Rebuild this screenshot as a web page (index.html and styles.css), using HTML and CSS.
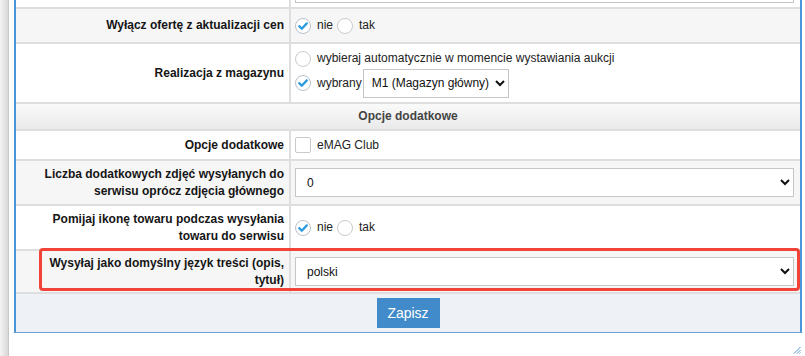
FILE: index.html
```html
<!DOCTYPE html>
<html lang="pl">

<head>
  <meta charset="UTF-8">
  <title>Ustawienia integracji</title>
  <link rel="stylesheet" href="styles.css">
</head>

<body>
  <div class="edge"></div>
  <div class="main">
    <div class="panel">
      <div class="row row-cut">
        <div class="label"></div>
        <div class="field"><input class="text-input" type="text"></div>
      </div>

      <div class="row row-alt row-toggle">
        <div class="label">Wyłącz ofertę z aktualizacji cen</div>
        <div class="field">
          <span class="choice">
            <svg class="radio" viewBox="0 0 16 16" width="16" height="16"><circle cx="8" cy="8" r="7.5" fill="#fff" stroke="#b8c2ca"/><path d="M4.2 8.2 L6.8 10.7 L11.8 5.4" fill="none" stroke="#2b9be0" stroke-width="2.3" stroke-linecap="round" stroke-linejoin="round"/></svg>
            nie
          </span>
          <span class="choice">
            <svg class="radio" viewBox="0 0 16 16" width="16" height="16"><circle cx="8" cy="8" r="7.5" fill="#fff" stroke="#cacaca"/></svg>
            tak
          </span>
        </div>
      </div>

      <div class="row row-stock">
        <div class="label">Realizacja z magazynu</div>
        <div class="field field-stack">
          <span class="choice choice-line">
            <svg class="radio" viewBox="0 0 16 16" width="16" height="16"><circle cx="8" cy="8" r="7.5" fill="#fff" stroke="#cacaca"/></svg>
            wybieraj automatycznie w momencie wystawiania aukcji
          </span>
          <span class="choice">
            <svg class="radio" viewBox="0 0 16 16" width="16" height="16"><circle cx="8" cy="8" r="7.5" fill="#fff" stroke="#b8c2ca"/><path d="M4.2 8.2 L6.8 10.7 L11.8 5.4" fill="none" stroke="#2b9be0" stroke-width="2.3" stroke-linecap="round" stroke-linejoin="round"/></svg>
            wybrany
            <select class="select select-stock">
              <option>M1 (Magazyn główny)</option>
            </select>
          </span>
        </div>
      </div>

      <div class="row row-section">
        <div class="section-title">Opcje dodatkowe</div>
      </div>

      <div class="row row-check">
        <div class="label">Opcje dodatkowe</div>
        <div class="field">
          <span class="choice">
            <span class="checkbox"></span>
            eMAG Club
          </span>
        </div>
      </div>

      <div class="row row-alt row-tall">
        <div class="label">Liczba dodatkowych zdjęć wysyłanych do serwisu oprócz zdjęcia głównego</div>
        <div class="field">
          <select class="select select-wide">
            <option>0</option>
          </select>
        </div>
      </div>

      <div class="row row-tall">
        <div class="label">Pomijaj ikonę towaru podczas wysyłania towaru do serwisu</div>
        <div class="field">
          <span class="choice">
            <svg class="radio" viewBox="0 0 16 16" width="16" height="16"><circle cx="8" cy="8" r="7.5" fill="#fff" stroke="#b8c2ca"/><path d="M4.2 8.2 L6.8 10.7 L11.8 5.4" fill="none" stroke="#2b9be0" stroke-width="2.3" stroke-linecap="round" stroke-linejoin="round"/></svg>
            nie
          </span>
          <span class="choice">
            <svg class="radio" viewBox="0 0 16 16" width="16" height="16"><circle cx="8" cy="8" r="7.5" fill="#fff" stroke="#cacaca"/></svg>
            tak
          </span>
        </div>
      </div>

      <div class="row row-alt row-lang highlighted">
        <div class="label">Wysyłaj jako domyślny język treści (opis, tytuł)</div>
        <div class="field">
          <select class="select select-wide">
            <option>polski</option>
          </select>
        </div>
      </div>

      <div class="actions">
        <button class="btn-save" type="button">Zapisz</button>
      </div>
    </div>

    <div class="grip-row">
      <svg class="grip" viewBox="0 0 8 8" width="8" height="8">
        <path d="M7.5 1 L1 7.5 M7.5 4 L4 7.5 M7.5 6.5 L6.5 7.5" stroke="#5d97d3" stroke-width="1"/>
      </svg>
    </div>
  </div>
</body>

</html>
```

FILE: styles.css
```css
* {
  box-sizing: border-box;
}

body {
  margin: 0;
  height: 356px;
  overflow: hidden;
  display: flex;
  background: #fff;
  font-family: "Liberation Sans", Arial, sans-serif;
  font-size: 12px;
  line-height: 17px;
  color: #222;
}

.edge {
  width: 9px;
  flex: none;
  background: linear-gradient(to right, #f4f4f4, #d7d7d7);
  border-right: 1px solid #c8c8c8;
}

.main {
  flex: 1;
  padding: 0 3px 0 5px;
  display: flex;
  flex-direction: column;
}

.panel {
  border: 2px solid #4a94da;
  border-top: 0;
  border-bottom: 1px solid #6c9fd2;
}

/* rows */

.row {
  display: grid;
  grid-template-columns: 275px 1fr;
  border-bottom: 2px solid #dedede;
  background: #fff;
}

.row-alt {
  background: #f6f6f6;
}

.row-cut {
  height: 9px;
  overflow: hidden;
}

.row-toggle {
  min-height: 35px;
}

.row-stock {
  min-height: 60px;
}

.row-section {
  display: flex;
  min-height: 27px;
  background: linear-gradient(#fafafa, #eaeaea);
}

.row-check {
  min-height: 30px;
}

.row-tall {
  min-height: 45px;
}

.row-lang {
  min-height: 43px;
}

.label {
  border-right: 2px solid #dedede;
  padding: 3px 5px 3px 10px;
  display: flex;
  align-items: center;
  justify-content: flex-end;
  text-align: right;
  font-weight: bold;
  color: #151515;
}

.field {
  padding: 0 6px 0 4px;
  display: flex;
  align-items: center;
}

.row-cut .field {
  align-items: flex-start;
}

.field-stack {
  flex-direction: column;
  align-items: flex-start;
  justify-content: center;
}

.section-title {
  flex: 1;
  display: flex;
  align-items: center;
  justify-content: center;
  font-weight: bold;
  color: #444;
}

/* controls */

.choice {
  display: inline-flex;
  align-items: center;
  gap: 6px;
  margin-right: 4px;
}

.choice-line {
  height: 20px;
}

.radio {
  display: block;
  flex: none;
}

.checkbox {
  width: 16px;
  height: 16px;
  border: 1px solid #cacaca;
  border-radius: 2px;
  background: #fff;
}

.text-input {
  width: 100%;
  height: 30px;
  margin-top: -27px;
  border: 1px solid #c6c6c6;
  background: #fff;
}

.select {
  height: 29px;
  border: 1px solid #c6c6c6;
  border-radius: 0;
  background: #fff;
  font-family: "Liberation Sans", Arial, sans-serif;
  font-size: 12px;
  color: #111;
  padding: 0 4px 0 7px;
}

.select-stock {
  width: 146px;
  margin-left: -5px;
  padding: 0 0 0 4px;
}

.select-wide {
  width: 100%;
}

/* highlighted row */

.highlighted {
  position: relative;
}

.highlighted::after {
  content: "";
  position: absolute;
  left: 23px;
  top: -3px;
  right: 0;
  bottom: 1px;
  border: 3px solid #f2433a;
  border-radius: 4px;
  pointer-events: none;
}

/* footer */

.actions {
  height: 38px;
  display: flex;
  align-items: center;
  justify-content: center;
  background: #eef1f5;
}

.btn-save {
  width: 63px;
  height: 30px;
  border: 0;
  background: #428bca;
  color: #fff;
  font-family: "Liberation Sans", Arial, sans-serif;
  font-size: 14px;
}

.grip-row {
  display: flex;
  justify-content: flex-end;
  padding: 13px 1px 0 0;
}

.grip {
  display: block;
}
```
